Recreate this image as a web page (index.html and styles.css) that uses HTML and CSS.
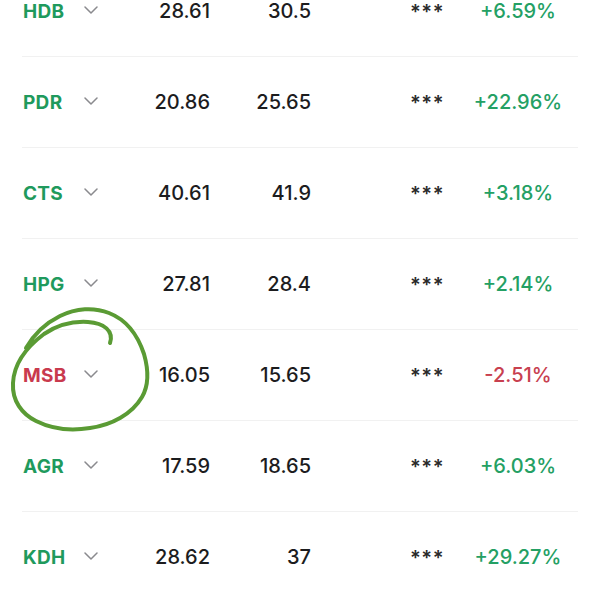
FILE: index.html
```html
<!DOCTYPE html>
<html lang="vi">
<head>
<meta charset="utf-8">
<title>Danh mục</title>
<link rel="stylesheet" href="styles.css">
</head>
<body>
<div class="list">
  <div class="row"><span class="tk up">HDB</span><span class="chev"><svg viewBox="0 0 14 8" width="14" height="8"><path d="M1 1 L7 7 L13 1" /></svg></span><span class="num">28.61</span><span class="num">30.5</span><span class="stars">***</span><span class="pct up">+6.59%</span></div>
  <div class="row"><span class="tk up">PDR</span><span class="chev"><svg viewBox="0 0 14 8" width="14" height="8"><path d="M1 1 L7 7 L13 1" /></svg></span><span class="num">20.86</span><span class="num">25.65</span><span class="stars">***</span><span class="pct up">+22.96%</span></div>
  <div class="row"><span class="tk up">CTS</span><span class="chev"><svg viewBox="0 0 14 8" width="14" height="8"><path d="M1 1 L7 7 L13 1" /></svg></span><span class="num">40.61</span><span class="num">41.9</span><span class="stars">***</span><span class="pct up">+3.18%</span></div>
  <div class="row"><span class="tk up">HPG</span><span class="chev"><svg viewBox="0 0 14 8" width="14" height="8"><path d="M1 1 L7 7 L13 1" /></svg></span><span class="num">27.81</span><span class="num">28.4</span><span class="stars">***</span><span class="pct up">+2.14%</span></div>
  <div class="row"><span class="tk down">MSB</span><span class="chev"><svg viewBox="0 0 14 8" width="14" height="8"><path d="M1 1 L7 7 L13 1" /></svg></span><span class="num">16.05</span><span class="num">15.65</span><span class="stars">***</span><span class="pct down">-2.51%</span></div>
  <div class="row"><span class="tk up">AGR</span><span class="chev"><svg viewBox="0 0 14 8" width="14" height="8"><path d="M1 1 L7 7 L13 1" /></svg></span><span class="num">17.59</span><span class="num">18.65</span><span class="stars">***</span><span class="pct up">+6.03%</span></div>
  <div class="row"><span class="tk up">KDH</span><span class="chev"><svg viewBox="0 0 14 8" width="14" height="8"><path d="M1 1 L7 7 L13 1" /></svg></span><span class="num">28.62</span><span class="num">37</span><span class="stars">***</span><span class="pct up">+29.27%</span></div>
</div>
<svg class="mark" viewBox="0 0 600 600" width="600" height="600">
  <path d="M110 343 C114 331 104 323 88 322 C72 321 56 326 44 334 C28 346 14 362 13 383 C12 401 22 414 36 421 C52 429 72 431 90 428 C112 425 132 414 142 397 C149 385 148 368 144 354 C138 336 127 320 109 313 C94 307 76 308 60 316 C46 323 34 334 26 348" />
</svg>
</body>
</html>
```

FILE: styles.css
```css
html, body {
  margin: 0;
  padding: 0;
  background: #ffffff;
  overflow: hidden;
}

body {
  width: 600px;
  height: 600px;
  position: relative;
  font-family: Inter, "Liberation Sans", sans-serif;
  color: #1c1c1e;
  line-height: 1;
}

.list {
  margin: -34px 22px 0 22px;
}

.row {
  height: 90px;
  border-bottom: 1px solid #f1f1f1;
  display: grid;
  grid-template-columns: 62px 38px 88px 101px 77px 78px 104px;
  align-items: center;
}

.tk {
  padding-left: 1px;
  font-size: 19px;
  font-weight: 700;
  letter-spacing: 0.3px;
}

.up { color: #1f9a5d; }
.down { color: #c93a4e; }

.chev {
  display: flex;
  align-items: center;
  padding-bottom: 2px;
}

.chev svg path {
  fill: none;
  stroke: #8a8a8e;
  stroke-width: 1.5;
  stroke-linecap: round;
  stroke-linejoin: round;
}

.num {
  text-align: right;
  font-size: 20px;
  font-weight: 500;
  color: #1c1c1e;
}

.stars {
  grid-column: 6;
  text-align: center;
  font-size: 20px;
  font-weight: 600;
  letter-spacing: 0.5px;
  color: #2a2a2a;
  padding-top: 2px;
}

.pct {
  text-align: center;
  font-size: 20px;
  font-weight: 500;
}

.pct.up { color: #24a064; }
.pct.down { color: #c8404f; }

.mark {
  position: absolute;
  left: 0;
  top: 0;
  pointer-events: none;
}

.mark path {
  fill: none;
  stroke: #5a9b34;
  stroke-width: 4;
  stroke-linecap: round;
  stroke-linejoin: round;
}
```
